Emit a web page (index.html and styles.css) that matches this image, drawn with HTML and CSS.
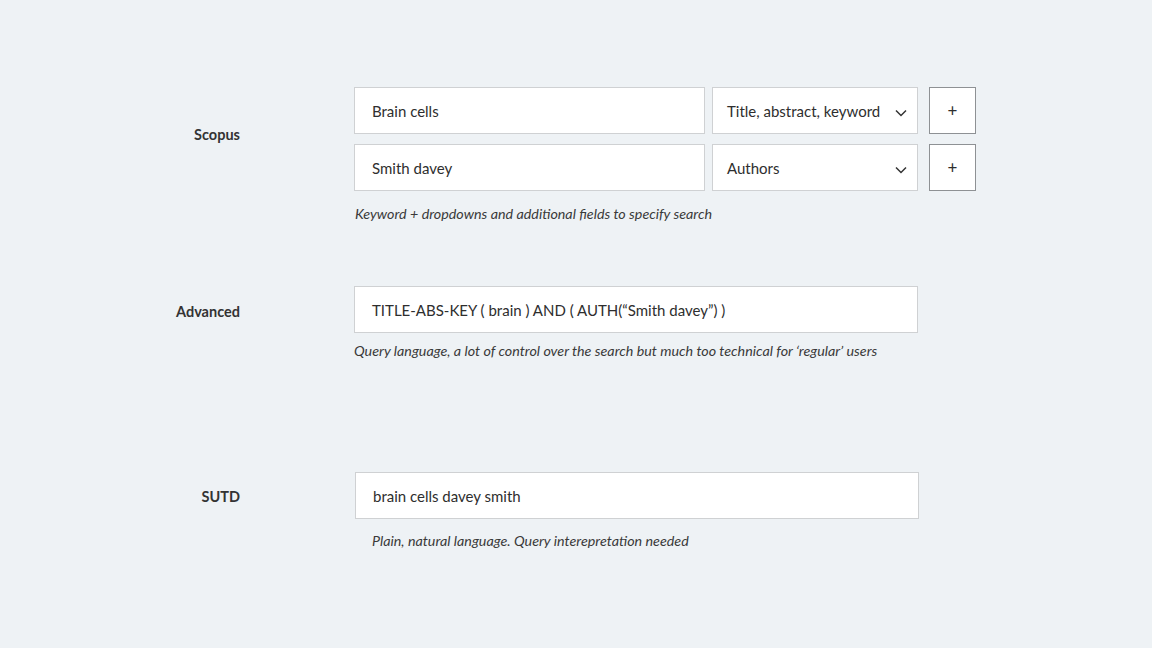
FILE: index.html
```html
<!DOCTYPE html>
<html>
<head>
<meta charset="utf-8">
<link rel="stylesheet" href="styles.css">
</head>
<body>
<main class="page">
  <section class="group group-scopus">
    <div class="label label-scopus">Scopus</div>
    <div class="content">
      <div class="row">
        <div class="field field-keyword">Brain cells</div>
        <div class="select"><span>Title, abstract, keyword</span><svg class="chev" width="12" height="8" viewBox="0 0 12 8"><path d="M1 1.5 L6 6.5 L11 1.5" fill="none" stroke="#333" stroke-width="1.5"/></svg></div>
        <div class="plus">+</div>
      </div>
      <div class="row">
        <div class="field field-keyword">Smith davey</div>
        <div class="select"><span>Authors</span><svg class="chev" width="12" height="8" viewBox="0 0 12 8"><path d="M1 1.5 L6 6.5 L11 1.5" fill="none" stroke="#333" stroke-width="1.5"/></svg></div>
        <div class="plus">+</div>
      </div>
      <p class="caption caption-scopus">Keyword + dropdowns and additional fields to specify search</p>
    </div>
  </section>

  <section class="group group-advanced">
    <div class="label label-advanced">Advanced</div>
    <div class="content">
      <div class="field field-wide">TITLE-ABS-KEY ( brain ) AND ( AUTH(“Smith davey”) )</div>
      <p class="caption caption-advanced">Query language, a lot of control over the search but much too technical for ‘regular’ users</p>
    </div>
  </section>

  <section class="group group-sutd">
    <div class="label label-sutd">SUTD</div>
    <div class="content content-sutd">
      <div class="field field-wide">brain cells davey smith</div>
      <p class="caption caption-sutd">Plain, natural language. Query interepretation needed</p>
    </div>
  </section>
</main>
</body>
</html>
```
FILE: styles.css
```css
html, body {
  margin: 0;
  padding: 0;
  background: #eef2f5;
}
body {
  font-family: Lato, "Open Sans", sans-serif;
  color: #2e2e2e;
  width: 1152px;
  height: 648px;
  overflow: hidden;
}
.page {
  padding-top: 87px;
}
.group {
  display: flex;
  align-items: flex-start;
}
.label {
  width: 240px;
  text-align: right;
  font-weight: 700;
  font-size: 14.5px;
  color: #333;
  margin-right: 114px;
  line-height: 20px;
}
.label-scopus { padding-top: 38px; }
.label-advanced { padding-top: 16px; }
.label-sutd { padding-top: 15px; }
.content-sutd { margin-left: 1px; }
.row {
  display: flex;
  align-items: center;
  margin-bottom: 10px;
}
.field, .select, .plus {
  box-sizing: border-box;
  height: 47px;
  background: #fff;
  border: 1px solid #cfd1d3;
  display: flex;
  align-items: center;
  font-size: 15px;
  color: #2e2e2e;
}
.field {
  padding-left: 17px;
}
.field-keyword { width: 351px; }
.select {
  width: 206px;
  margin-left: 7px;
  padding-left: 14px;
  padding-right: 10px;
  justify-content: space-between;
}
.chev { margin-top: 4px; }
.plus {
  width: 47px;
  margin-left: 11px;
  justify-content: center;
  border-color: #8e9194;
  font-size: 17px;
}
.field-wide { width: 564px; }
.caption {
  margin: 0;
  font-style: italic;
  font-size: 14.3px;
  color: #3a3a3a;
  line-height: 18px;
}
.caption-scopus { margin-left: 1px; margin-top: 14px; }
.group-advanced { margin-top: 63px; }
.caption-advanced { margin-top: 9px; }
.group-sutd { margin-top: 112px; }
.caption-sutd { margin-top: 13px; margin-left: 17px; }
```
